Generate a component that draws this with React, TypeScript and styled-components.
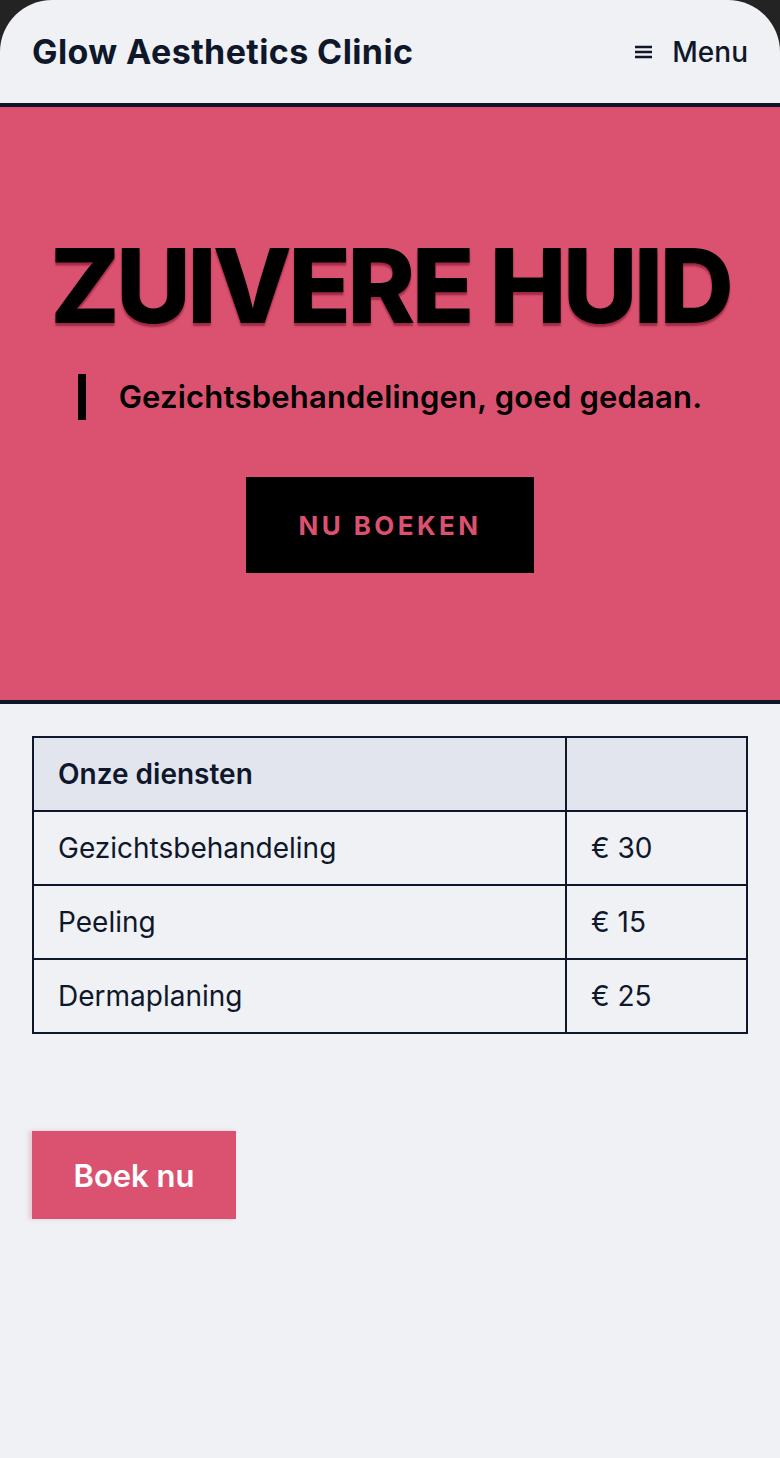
import React from 'react';
import styled, { createGlobalStyle } from 'styled-components';

const INK = '#0f172a';
const PINK = '#db5270';

const GlobalStyle = createGlobalStyle`
  html, body {
    margin: 0;
    padding: 0;
    background: #232323;
  }
  * {
    box-sizing: border-box;
  }
`;

const Screen = styled.div`
  min-height: 1458px;
  background: #eff1f5;
  border-radius: 52px 52px 0 0;
  overflow: hidden;
  font-family: Inter, 'Noto Sans', sans-serif;
  color: ${INK};
`;

const Header = styled.header`
  display: flex;
  height: 107px;
  padding: 0 32px;
  align-items: center;
  justify-content: space-between;
  border-bottom: 4px solid ${INK};
`;

const Brand = styled.div`
  font-size: 34px;
  font-weight: 700;
  letter-spacing: 0.4px;
`;

const MenuButton = styled.button`
  display: flex;
  align-items: center;
  gap: 20px;
  padding: 0;
  border: 0;
  background: none;
  font-family: inherit;
  font-size: 28px;
  font-weight: 500;
  color: ${INK};
`;

const Hero = styled.section`
  display: flex;
  flex-direction: column;
  align-items: center;
  justify-content: center;
  height: 597px;
  background: ${PINK};
  border-bottom: 4px solid ${INK};
`;

const HeroTitle = styled.h1`
  margin: 0;
  font-size: 103px;
  font-weight: 800;
  line-height: 1;
  letter-spacing: -3.8px;
  color: #000;
  text-shadow: 0 3px 2px rgba(110, 10, 35, 0.55);
`;

const Tagline = styled.p`
  margin: 37px 0 0;
  padding-left: 33px;
  border-left: 8px solid #000;
  font-size: 31px;
  font-weight: 600;
  line-height: 46px;
  letter-spacing: 0.2px;
  color: #000;
`;

const HeroButton = styled.a`
  display: flex;
  align-items: center;
  justify-content: center;
  width: 288px;
  height: 96px;
  margin-top: 57px;
  background: #000;
  color: ${PINK};
  font-size: 26px;
  font-weight: 700;
  letter-spacing: 3.4px;
  text-decoration: none;
`;

const Services = styled.section`
  padding: 32px 32px 0;
`;

const Table = styled.table`
  width: 100%;
  border-collapse: collapse;
  border: 2px solid ${INK};
`;

const Cell = styled.td<{ $head?: boolean }>`
  height: 74px;
  padding: 0 24px;
  border: 2px solid ${INK};
  font-size: 28px;
  font-weight: ${(p) => (p.$head ? 600 : 400)};
  background: ${(p) => (p.$head ? '#e2e5ee' : 'transparent')};
  &:first-child {
    width: 533px;
  }
`;

const BookButton = styled.a`
  display: inline-flex;
  align-items: center;
  justify-content: center;
  width: 204px;
  height: 88px;
  margin: 97px 0 0 32px;
  background: ${PINK};
  color: #fff;
  font-size: 31px;
  font-weight: 600;
  text-decoration: none;
  box-shadow: -3px 0 4px rgba(219, 82, 112, 0.25);
`;

const MenuIcon = () => (
  <svg width="17" height="14" viewBox="0 0 17 14">
    <g stroke={INK} strokeWidth="2.4">
      <line x1="0" y1="2" x2="17" y2="2" />
      <line x1="0" y1="7" x2="17" y2="7" />
      <line x1="0" y1="12" x2="17" y2="12" />
    </g>
  </svg>
);

const services = [
  { name: 'Gezichtsbehandeling', price: '€ 30' },
  { name: 'Peeling', price: '€ 15' },
  { name: 'Dermaplaning', price: '€ 25' },
];

export default function App() {
  return (
    <Screen>
      <GlobalStyle />
      <Header>
        <Brand>Glow Aesthetics Clinic</Brand>
        <MenuButton>
          <MenuIcon />
          Menu
        </MenuButton>
      </Header>
      <Hero>
        <HeroTitle>ZUIVERE HUID</HeroTitle>
        <Tagline>Gezichtsbehandelingen, goed gedaan.</Tagline>
        <HeroButton href="#">NU BOEKEN</HeroButton>
      </Hero>
      <Services>
        <Table>
          <tbody>
            <tr>
              <Cell $head>Onze diensten</Cell>
              <Cell $head />
            </tr>
            {services.map((s) => (
              <tr key={s.name}>
                <Cell>{s.name}</Cell>
                <Cell>{s.price}</Cell>
              </tr>
            ))}
          </tbody>
        </Table>
      </Services>
      <BookButton href="#">Boek nu</BookButton>
    </Screen>
  );
}
